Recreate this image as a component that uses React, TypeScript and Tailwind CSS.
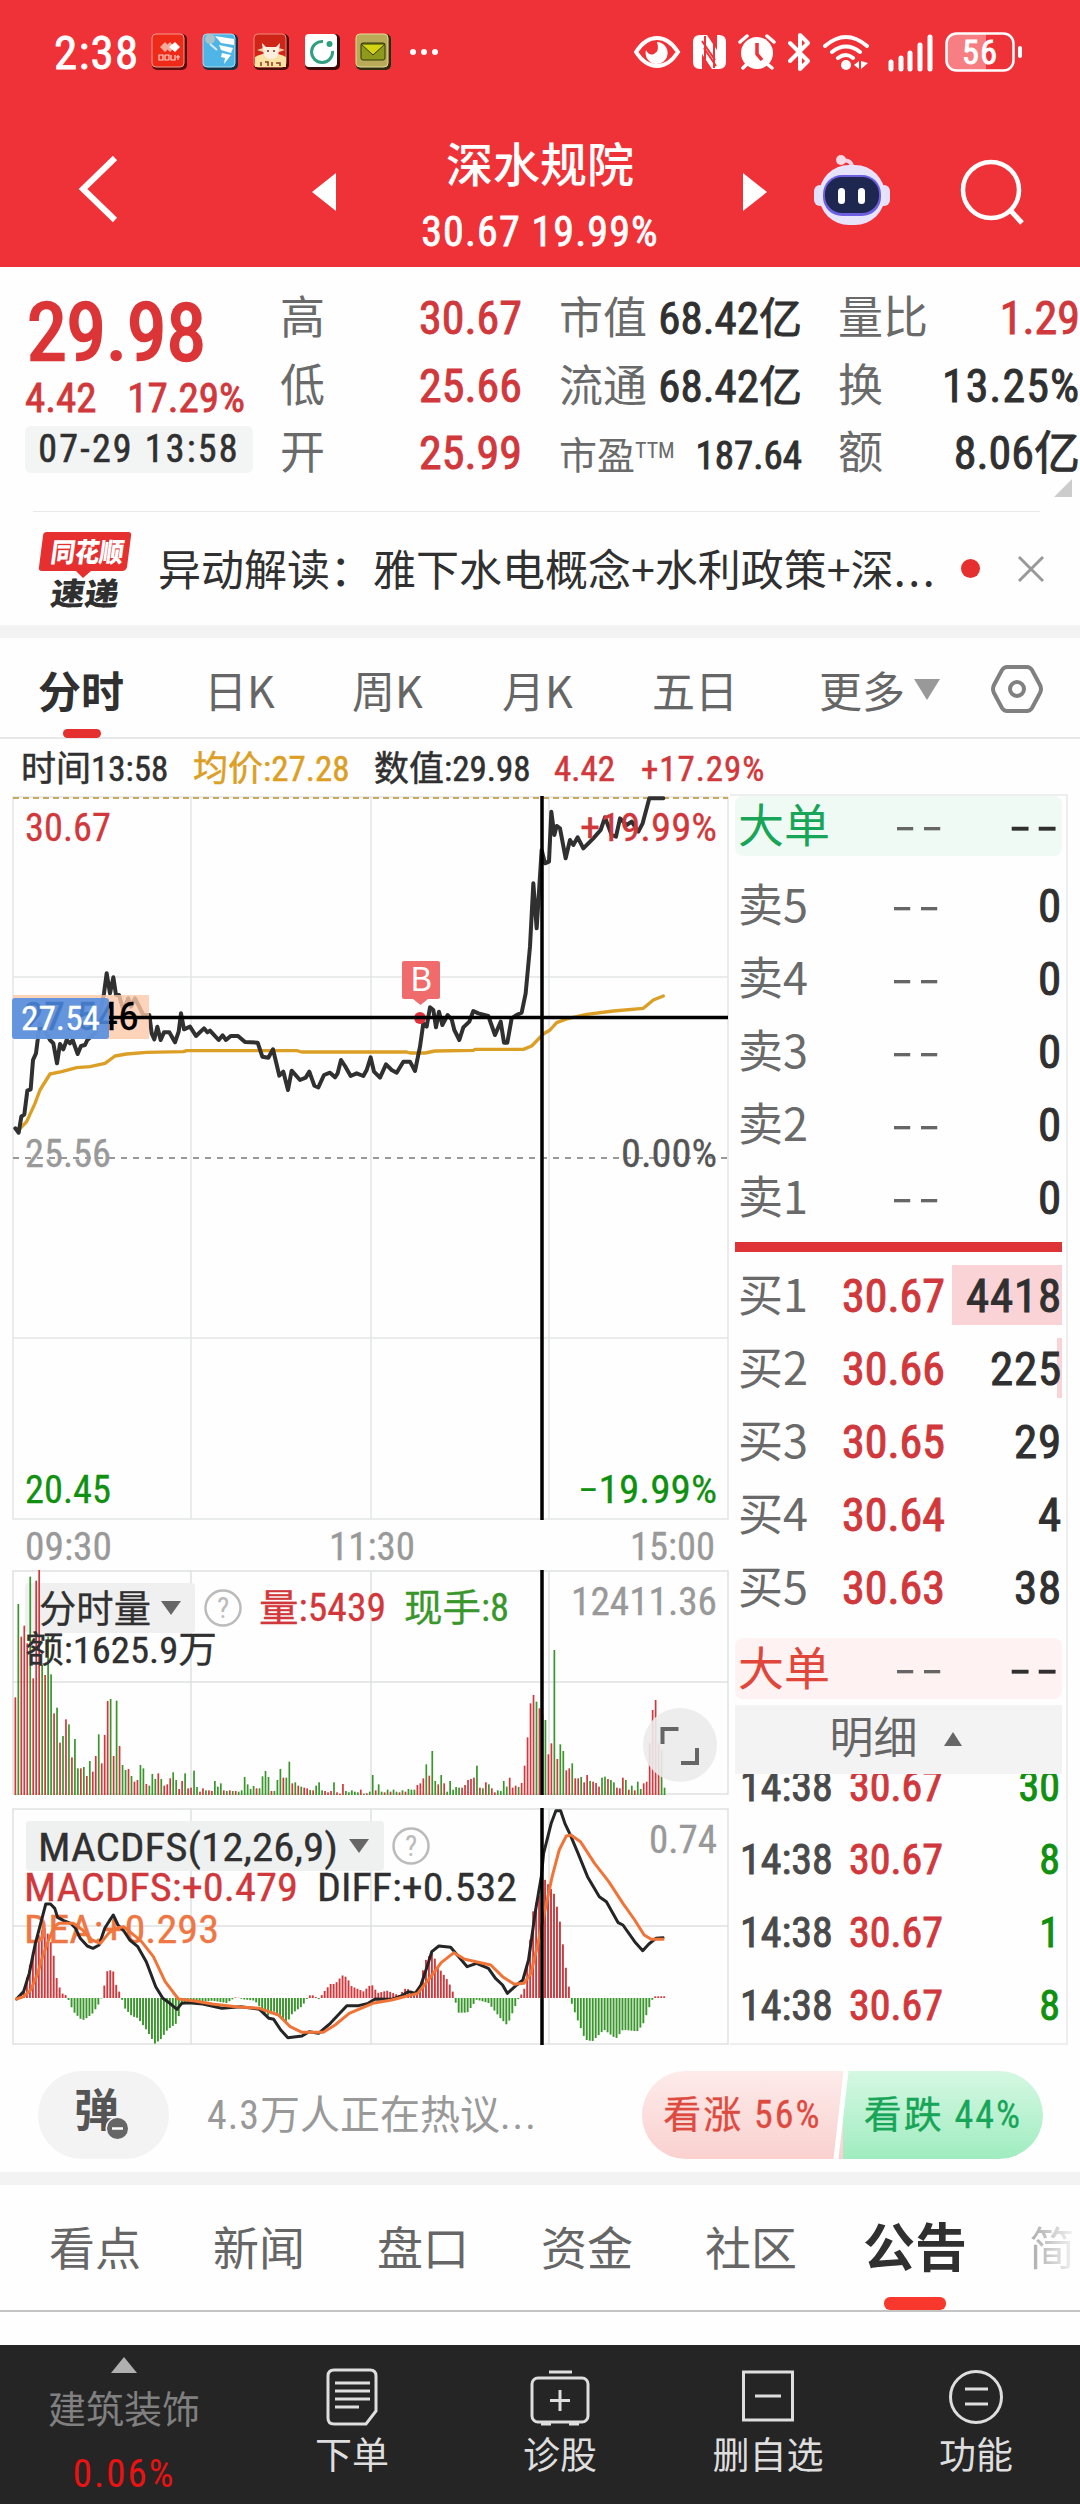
import type { ReactNode } from 'react'

const GREY = '#999999'
const RED = '#d0383c'
const GREEN = '#38962a'

interface Level {
  label: string
  price: string
  size: string
  depth?: string
}

const SELLS: Level[] = [
  { label: '卖5', price: '--', size: '0' },
  { label: '卖4', price: '--', size: '0' },
  { label: '卖3', price: '--', size: '0' },
  { label: '卖2', price: '--', size: '0' },
  { label: '卖1', price: '--', size: '0' },
]

const BUYS: Level[] = [
  { label: '买1', price: '30.67', size: '4418', depth: 'w-[110px]' },
  { label: '买2', price: '30.66', size: '225', depth: 'w-[5px]' },
  { label: '买3', price: '30.65', size: '29' },
  { label: '买4', price: '30.64', size: '4' },
  { label: '买5', price: '30.63', size: '38' },
]

const TRADES = [
  { time: '14:38', price: '30.67', size: '30' },
  { time: '14:38', price: '30.67', size: '8' },
  { time: '14:38', price: '30.67', size: '1' },
  { time: '14:38', price: '30.67', size: '8' },
]

// Price and average lines, in thirds of a pixel from the top-left of the chart area
const PRICE =
  '46,1045 56,1058 64,1010 73,1003 82,932 92,928 99,840 108,820 113,780 118,730 128,740 150,780 160,790 171,850 180,792 190,808 200,780 210,790 218,780 233,822 243,798 255,795 262,780 285,760 300,700 312,640 320,580 330,640 340,592 348,645 357,645 370,690 385,655 393,680 405,655 430,705 448,705 455,760 463,778 472,740 482,780 492,757 508,757 525,787 536,755 543,700 552,748 570,740 588,768 612,745 622,757 630,752 656,780 668,766 678,780 692,768 714,768 735,786 773,788 787,830 805,833 819,808 838,887 850,875 864,930 875,872 900,900 917,893 928,875 943,917 955,922 972,885 990,878 1005,892 1013,880 1023,840 1035,858 1052,888 1070,880 1090,888 1100,870 1112,832 1122,875 1140,893 1158,853 1175,870 1190,878 1210,845 1230,845 1245,873 1260,800 1270,730 1280,740 1290,682 1300,690 1308,742 1317,695 1327,735 1343,705 1355,718 1363,750 1378,780 1390,742 1408,725 1420,693 1435,700 1465,708 1485,765 1502,725 1512,788 1522,788 1535,715 1550,705 1565,698 1577,640 1590,500 1600,310 1610,445 1625,210 1635,250 1647,245 1654,95 1663,165 1670,138 1680,145 1697,235 1710,180 1720,195 1733,172 1750,205 1780,175 1802,150 1815,112 1835,165 1848,170 1860,115 1880,135 1895,125 1915,155 1928,130 1948,55 1990,55'
const AVERAGE =
  '56,1050 80,1025 105,970 120,930 150,882 185,875 230,863 270,860 315,850 345,828 380,822 440,817 550,815 560,812 890,812 905,816 1220,816 1230,819 1275,819 1305,813 1420,811 1425,808 1570,808 1595,798 1630,762 1650,750 1670,728 1700,717 1760,703 1840,693 1930,685 1960,660 1990,648'

// One bar a minute; a negative figure is a falling minute
const VOLUME = [
  293, -573, 475, 508, 455, -655, 350, 643, 675, -390, 360, -475, -362, 245, -262, 157, -177, 227, -212, 113, -168, -80,
  80, -84, 57, -102, 70, 117, -182, 95, 180, 282, -288, 117, -283, 147, -90, -75, 78, -57, 40, 45, -90, -80, 33, -28,
  -63, -48, 65, -48, 28, 32, 50, -68, -45, 18, 42, -65, 20, 22, -73, -24, 10, 20, -14, 14, 12, -42, -25, -35, 14, -12,
  14, -12, 12, -10, -14, -54, -32, -18, -27, 20, -20, -56, -72, -54, 12, -12, -45, -78, 52, -52, -100, 35, -38, 28,
  -25, 22, 20, -15, 14, -28, -38, -14, 12, 8, 12, -38, 8, 4, 33, -12, -8, -14, -10, -8, 16, -4, 5, -10, -60, 14, -32,
  -10, 8, -16, 10, -16, -10, 8, -14, 10, -18, -16, -16, 30, 35, 50, -92, 58, -132, -42, 32, -60, 35, -10, -42, -16,
  -24, -22, 22, 30, 45, 48, 52, -88, 22, -20, 38, -32, 20, 8, -14, -12, -42, -25, 52, 22, 28, -24, 36, 88, 173, 275,
  300, -280, 260, 240, -225, 122, 155, -435, 108, -152, -132, 74, 80, -95, 50, 50, -54, 38, 60, -42, 40, 36, 25, -52,
  -55, 48, -45, -38, 22, 20, 52, -45, 16, -28, 14, -40, -18, 35, 40, 155, 255, 285, 155, -135, -22,
]

const DIFF =
  '35,597 50,575 62,520 75,430 90,350 97,312 107,312 116,325 122,352 135,362 150,370 160,385 170,415 185,438 197,445 210,435 222,385 232,362 240,345 250,375 262,392 275,420 292,440 310,485 330,560 345,595 360,610 375,628 385,610 400,608 430,612 470,625 510,620 550,628 570,655 580,658 595,690 610,713 640,708 655,695 675,700 700,670 720,640 735,617 760,617 780,610 795,597 830,598 850,588 865,575 880,580 892,555 905,500 915,455 930,438 955,442 972,470 990,500 1010,490 1035,505 1050,535 1065,555 1075,580 1095,555 1108,540 1120,480 1135,330 1147,230 1152,160 1168,70 1178,32 1188,32 1197,70 1208,103 1225,160 1245,230 1270,290 1285,305 1310,368 1320,375 1345,425 1362,452 1375,432 1390,415 1405,413'
const DEA =
  '35,597 50,590 65,570 80,520 90,470 103,420 115,380 125,370 155,370 175,390 195,420 213,430 230,400 245,385 262,380 275,395 300,425 325,470 350,545 378,597 410,602 450,612 500,620 550,625 590,645 615,680 640,697 685,697 710,675 740,640 790,610 830,600 885,580 905,545 935,488 962,458 985,478 1040,495 1065,530 1090,553 1110,550 1125,520 1140,430 1155,330 1170,230 1185,150 1200,108 1210,105 1230,125 1260,190 1290,245 1320,310 1345,360 1365,405 1380,418 1405,418'
const HIST: [number, number][] = [
  [38, 0], [50, 20], [60, 80], [70, 140], [85, 200], [97, 210], [108, 165], [114, 125], [120, 60], [130, 15], [140, 8],
  [146, -8], [155, -40], [170, -62], [178, -66], [195, -48], [205, -28], [213, -8], [217, 8], [222, 45], [228, 85],
  [233, 82], [238, 92], [246, 40], [256, 8], [264, -30], [280, -55], [292, -60], [310, -95], [328, -137], [340, -125],
  [355, -95], [375, -75], [385, -20], [400, -15], [450, -8], [480, -15], [500, 3], [515, -4], [540, -8], [555, -35],
  [570, -55], [580, -40], [595, -60], [608, -75], [620, -45], [640, -25], [655, 8], [665, 8], [675, -4], [690, 25],
  [700, 42], [710, 42], [725, 68], [735, 62], [745, 35], [770, 20], [787, 42], [800, 15], [820, 22], [845, 8],
  [860, 30], [880, 15], [890, 40], [900, 110], [917, 140], [925, 100], [935, 80], [950, 50], [962, 10], [970, -44],
  [990, -44], [1010, -5], [1035, -15], [1060, -60], [1075, -82], [1090, -30], [1100, 3], [1110, 20], [1120, 130],
  [1130, 265], [1140, 300], [1155, 355], [1175, 310], [1187, 225], [1200, 80], [1207, 20], [1212, -20], [1225, -70],
  [1240, -125], [1255, -130], [1280, -95], [1305, -122], [1320, -95], [1350, -100], [1362, -80], [1375, -30],
  [1385, 5], [1408, 5],
]

function histAt(x: number) {
  const i = HIST.findIndex(([px]) => px >= x)
  if (i <= 0) return 0
  const [x0, y0] = HIST[i - 1]
  const [x1, y1] = HIST[i]
  return y0 + ((y1 - y0) * (x - x0)) / (x1 - x0)
}

interface LabelProps {
  x: number
  y: number
  w: number
  fill: string
  size?: number
  children: string
}

// Chart label stretched to a fixed width; y is the baseline
function Label({ x, y, w, fill, size = 38, children }: LabelProps) {
  return (
    <text x={x} y={y} textLength={w} lengthAdjust="spacingAndGlyphs" fontSize={size} fill={fill} stroke={fill} strokeWidth="0.3">
      {children}
    </text>
  )
}

function StatusBar() {
  return (
    <div className="flex h-[104px] items-center pl-[54px] pr-[57px] text-white">
      <span className="w-[97px] text-[47px] leading-none tracking-[1.2px] [-webkit-text-stroke:0.8px]">2:38</span>
      <div className="flex gap-[14px]">
        <svg width="37" height="38" viewBox="0 0 37 38">
          <rect x="1" y="1" width="35" height="36" rx="5" fill="#5b0d0d" />
          <rect x="1" y="1" width="32" height="33" rx="4" fill="#ee2a18" stroke="#f79a8c" />
          <path d="M9 14l5-5 5 5-5 5zM14 14l5-5 5 5-5 5z" fill="#f7a99a" />
          <path d="M18 14l6-5 5 5-5 5z" fill="#fff" />
          <path d="M8 22h4v5H8zM14 22h4v5M14 22v5h4M20 22v5h4v-5M27 22v5M25 24h4" stroke="#fbd3cc" strokeWidth="1.2" fill="none" />
        </svg>
        <svg width="37" height="38" viewBox="0 0 37 38">
          <rect x="1" y="1" width="35" height="36" rx="5" fill="#173244" />
          <rect x="1" y="1" width="32" height="33" rx="4" fill="#4fb5e6" stroke="#a9def5" />
          <path d="M13 3l19 3v6l-13-2zM17 12l14 3-2 5-10-3zM20 20l9 2-7 9 1-6-4-1z" fill="#fff" />
          <circle cx="8" cy="6" r="5" fill="#a9c3cc" />
          <path d="M8 11l7 6" stroke="#dceaf0" strokeWidth="2" />
        </svg>
        <svg width="37" height="38" viewBox="0 0 37 38">
          <rect x="1" y="1" width="35" height="36" rx="5" fill="#4a0d08" />
          <rect x="1" y="1" width="32" height="33" rx="4" fill="#cf2418" stroke="#f08a7b" />
          <path d="M2 24q15-8 31 0v10H2z" fill="#f8e2a4" />
          <path d="M9 10l4 4h10l4-4-1 8q-1 8-8 8t-8-8z" fill="#fdeedd" />
          <path d="M4 17l6-2v4zM32 17l-6-2v4z" fill="#f4c9a0" />
          <circle cx="15" cy="18" r="1" fill="#7a2a16" />
          <circle cx="21" cy="18" r="1" fill="#7a2a16" />
          <path d="M8 29v4M12 29h3v4M19 29v4M23 30h4v3" stroke="#8a3a1a" strokeWidth="1.5" fill="none" />
        </svg>
        <svg width="37" height="38" viewBox="0 0 37 38">
          <rect x="1" y="1" width="35" height="36" rx="5" fill="#3a0b0b" />
          <rect x="1" y="1" width="32" height="33" rx="4" fill="#fff" />
          <path d="M19 8.500A10.500 10.500 0 1 0 28.500 18" stroke="#2f9f80" strokeWidth="3" fill="none" />
          <circle cx="25.500" cy="11" r="3" fill="#2f9f80" />
        </svg>
        <svg width="37" height="38" viewBox="0 0 37 38">
          <rect x="1" y="1" width="35" height="36" rx="5" fill="#2f2a10" />
          <rect x="1" y="1" width="32" height="33" rx="4" fill="#b9ab57" stroke="#e6dd9c" />
          <rect x="6" y="10" width="24" height="17" rx="2" fill="#8f9a1c" stroke="#333a0a" />
          <path d="M6 11h24l-12 11z" fill="#d5d413" stroke="#333a0a" />
        </svg>
      </div>
      <div className="ml-[18px] flex gap-[5px]">
        <i className="size-[6px] rounded-full bg-white" />
        <i className="size-[6px] rounded-full bg-white" />
        <i className="size-[6px] rounded-full bg-white" />
      </div>
      <svg className="ml-auto" width="389" height="42" viewBox="634 31 389 42" fill="none" stroke="#fff">
        <path d="M636 52q9-14 21-14t21 14q-9 14-21 14t-21-14z" strokeWidth="4" />
        <path d="M657 42a11 11 0 1 1-11 8q3 6 8 4 6-3 3-12z" fill="#fff" stroke="none" />
        <path d="M700 35h7l10 15V35h2q7 0 7 7v20q0 7-7 7h-7l-10-15v15h-2q-7 0-7-7V42q0-7 7-7z" fill="#fff" stroke="none" />
        <path d="M705 36v25M714 44v24M702 41l13 19M704 48l12 18" stroke="#ef3138" strokeWidth="2" />
        <circle cx="757" cy="53" r="16" fill="#fff" stroke="none" />
        <path d="M740 42l7-6M774 42l-7-6M748 63l-5 5M766 63l6 5" strokeWidth="3.500" strokeLinecap="round" />
        <path d="M757 43v11l5 6" stroke="#ef3138" strokeWidth="3.500" />
        <path d="M790 43l18 18-8 8V35l8 8-18 18" strokeWidth="4" strokeLinejoin="round" strokeLinecap="round" />
        <path d="M825 46q21-18 42 0M832 52q14-11 28 0M838 58q8-6 15 0" strokeWidth="4" strokeLinecap="round" />
        <circle cx="846" cy="65" r="5" fill="#fff" stroke="none" />
        <path d="M854 65l5-4v8zM861 61v8l7-6z" fill="#fff" stroke="none" />
        <path d="M891 62v7M901 58v11M910 53v16M920 45v24M930 37v32" strokeWidth="5" strokeLinecap="round" />
        <path d="M986 33h-30q-10 0-10 10v18q0 10 10 10h30z" fill="#f77f83" stroke="none" />
        <rect x="946.500" y="33.500" width="67" height="37" rx="10" strokeWidth="2.500" />
        <rect x="1018" y="46" width="4" height="12" rx="2" fill="#fff" stroke="none" />
        <text x="962" y="64" fontSize="34" fill="#fff" strokeWidth="1" textLength="35">56</text>
      </svg>
    </div>
  )
}

function Header() {
  return (
    <header className="h-[267px] bg-[#ef3138] text-white">
      <StatusBar />
      <div className="flex h-[163px] items-start">
        <svg className="ml-[76px] mt-[50px]" width="44" height="70" viewBox="0 0 44 70" fill="none">
          <path d="M39 4L7 35l32 31" stroke="#fff" strokeWidth="6" />
        </svg>
        <svg className="ml-[192px] mt-[69px]" width="24" height="38" viewBox="0 0 24 38">
          <path d="M24 0v38L0 19z" fill="#fff" />
        </svg>
        <div className="ml-[84px] flex w-[240px] flex-col items-center">
          <h1 className="mt-[31px] text-[47px] font-medium leading-[62px]">深水规院</h1>
          <p className="mt-[12px] text-[42px] leading-[46px] tracking-[1.1px] [-webkit-text-stroke:0.8px]">30.67 19.99%</p>
        </div>
        <svg className="ml-[83px] mt-[69px]" width="24" height="38" viewBox="0 0 24 38">
          <path d="M0 0v38l24-19z" fill="#fff" />
        </svg>
        <svg className="ml-[47px] mt-[49px]" width="76" height="74" viewBox="0 0 76 74">
          <path d="M28 8q10-3 11 10" stroke="#f6d3e4" strokeWidth="4" fill="none" />
          <circle cx="27" cy="7" r="5" fill="#f8d9e6" />
          <rect x="0" y="32" width="12" height="21" rx="6" fill="#e3e0fa" />
          <rect x="64" y="32" width="12" height="21" rx="6" fill="#e3e0fa" />
          <rect x="5" y="12" width="66" height="60" rx="30" fill="#e7e3fb" />
          <rect x="9" y="22" width="58" height="41" rx="19" fill="#6e5fe0" />
          <rect x="11" y="24" width="54" height="36" rx="17" fill="#1d2750" />
          <rect x="24" y="35" width="7" height="16" rx="3.500" fill="#fff" />
          <rect x="44" y="35" width="7" height="16" rx="3.500" fill="#fff" />
        </svg>
        <svg className="ml-[70px] mt-[55px]" width="66" height="66" viewBox="0 0 66 66" fill="none" stroke="#fff" strokeWidth="4.500">
          <circle cx="31" cy="31" r="28" />
          <path d="M51 52l11 12" strokeWidth="5" />
        </svg>
      </div>
    </header>
  )
}

function Quote({ label, children, red }: { label: ReactNode; children: ReactNode; red?: boolean }) {
  return (
    <div className="flex h-[67.500px] items-center justify-between whitespace-nowrap">
      <span className="text-[45px] text-[#6a6a6a]">{label}</span>
      <span className={`text-[46px] [-webkit-text-stroke:0.9px] ${red ? 'text-[#d0383c]' : 'text-[#303030]'}`}>{children}</span>
    </div>
  )
}

function Quotes() {
  return (
    <section className="relative flex h-[245px] pt-[18px]">
      <div className="ml-[25px] w-[228px] text-[#dc3537]">
        <p className="mt-[9px] pl-[2px] text-[80px] leading-[78px] [-webkit-text-stroke:2.500px]">29.98</p>
        <p className="mt-[4px] flex justify-between pr-[8px] text-[41px] leading-[44px] text-[#d0383c] [-webkit-text-stroke:0.8px]">
          <span>4.42</span>
          <span>17.29%</span>
        </p>
        <p className="mt-[6px] h-[47px] rounded-md bg-[#f3f4f4] text-center text-[38px] leading-[47px] tracking-[2.2px] text-[#303030] [-webkit-text-stroke:0.6px]">
          07-29 13:58
        </p>
      </div>
      <div className="ml-[27px] w-[242px]">
        <Quote label="高" red>30.67</Quote>
        <Quote label="低" red>25.66</Quote>
        <Quote label="开" red>25.99</Quote>
      </div>
      <div className="ml-[37px] w-[243px]">
        <Quote label={<span className="text-[44px]">市值</span>}><span className="text-[45px]">68.42<span className="text-[43px]">亿</span></span></Quote>
        <Quote label={<span className="text-[44px]">流通</span>}><span className="text-[45px]">68.42<span className="text-[43px]">亿</span></span></Quote>
        <Quote label={<span className="text-[38px]">市盈<sup className="top-[-11px] text-[22px]">TTM</sup></span>}>
          <span className="text-[39px]">187.64</span>
        </Quote>
      </div>
      <div className="ml-[36px] w-[242px]">
        <Quote label="量比" red>1.29</Quote>
        <Quote label="换"><span className="tracking-[1px]">13.25%</span></Quote>
        <Quote label="额">8.06亿</Quote>
      </div>
      <svg className="absolute left-[1054px] top-[212px]" width="18" height="18" viewBox="0 0 18 18">
        <path d="M18 0v18H0z" fill="#ccc" />
      </svg>
    </section>
  )
}

function News() {
  return (
    <section className="flex h-[113px] items-center">
      <svg className="ml-[38px] mt-[2px]" width="96" height="78" viewBox="0 0 96 78">
        <path d="M9 1h81q4 0 3 4l-4 31q-1 4-5 4H53l-8 7-7-7H4q-4 0-3-4L5 5q0-4 4-4z" fill="#e5302f" />
        <g transform="skewX(-8)" fontWeight="900">
          <text x="16" y="31" fontSize="27" fill="#fff" textLength="73" lengthAdjust="spacingAndGlyphs">同花顺</text>
          <text x="22" y="74" fontSize="31" fill="#303030" textLength="68" lengthAdjust="spacingAndGlyphs">速递</text>
        </g>
      </svg>
      <p className="-mt-[3px] ml-[24px] w-[790px] whitespace-nowrap text-[43px] text-[#303030] [font-family:Noto_Sans_CJK_SC,sans-serif]">
        异动解读：雅下水电概念+水利政策+深<span className="tracking-[2.500px]">...</span>
      </p>
      <i className="ml-[13px] size-[19px] rounded-full bg-[#e5302f]" />
      <svg className="ml-[37px]" width="28" height="28" viewBox="0 0 28 28" stroke="#999" strokeWidth="3">
        <path d="M2 2l24 24M26 2L2 26" />
      </svg>
    </section>
  )
}

function PeriodTabs() {
  return (
    <nav className="relative flex h-[101px] items-center border-b-2 border-[#e8e8e8] pt-[3px] text-[43px] text-[#666] [font-family:Noto_Sans_CJK_SC,sans-serif]">
      <span className="ml-[38px] w-[166px] font-bold text-[#303030]">分时</span>
      <span className="w-[148px]">日K</span>
      <span className="w-[150px]">周K</span>
      <span className="w-[150px]">月K</span>
      <span className="w-[167px]">五日</span>
      <span>更多</span>
      <svg className="ml-[9px]" width="26" height="21" viewBox="0 0 26 21">
        <path d="M0 0h26L13 21z" fill="#999" />
      </svg>
      <svg className="ml-[50px]" width="54" height="52" viewBox="0 0 54 52" fill="none" stroke="#808080" strokeWidth="4">
        <path d="M17 4h20q3 0 5 3l8 15q2 4 0 8l-8 15q-2 3-5 3H17q-3 0-5-3L4 30q-2-4 0-8l8-15q2-3 5-3z" />
        <circle cx="27" cy="26" r="7" />
      </svg>
      <i className="absolute bottom-[-1px] left-[63px] h-[9px] w-[38px] rounded-full bg-[#e5302f]" />
    </nav>
  )
}

function Legend() {
  return (
    <div className="flex h-[57px] items-center whitespace-nowrap pl-[21px] pt-[5px] text-[35px] text-[#303030] [-webkit-text-stroke:0.5px]">
      <span className="w-[172px]">时间13:58</span>
      <span className="w-[181px] text-[#dc9f26]">均价:27.28</span>
      <span className="w-[180px]">数值:29.98</span>
      <span className="w-[87px] text-[#d0383c]">4.42</span>
      <span className="tracking-[0.9px] text-[#d0383c]">+17.29%</span>
    </div>
  )
}

function PriceChart() {
  return (
    <svg className="block" width="730" height="774" viewBox="0 796 730 774">
      <path d="M13 797H728V1519H13zM191 797V1519M371 797V1519M549 797V1519M13 977H728M13 1338H728" fill="none" stroke="#e4e6e6" strokeWidth="1.500" />
      <path d="M13 1158H728" stroke="#999" strokeWidth="2" strokeDasharray="6 6" />
      <path d="M13 798H728" stroke="#c9a860" strokeWidth="2" strokeDasharray="6 4" />
      <Label x={25} y={1167} w={86} fill={GREY}>25.56</Label>
      <Label x={621} y={1167} w={96} fill="#555">0.00%</Label>
      <g transform="translate(0 780) scale(0.33333)" fill="none" strokeLinejoin="round" strokeLinecap="round">
        <polyline points={AVERAGE} stroke="#dc9f26" strokeWidth="10" />
        <polyline points={PRICE} stroke="#303030" strokeWidth="12" />
      </g>
      <Label x={25} y={841} w={86} fill={RED}>30.67</Label>
      <Label x={580} y={841} w={137} fill={RED}>+19.99%</Label>
      <Label x={25} y={1503} w={86} fill="#109010">20.45</Label>
      <Label x={578} y={1503} w={139} fill="#109010">−19.99%</Label>
      <circle cx="420" cy="1018" r="6" fill="#e0323c" />
      <path d="M404 961h34q2 0 2 2v34q0 2-2 2h-10l-7.500 6-7.500-6h-9q-2 0-2-2v-34q0-2 2-2z" fill="#f06c6c" />
      <text x="421" y="991" fontSize="33" fill="#fff" textAnchor="middle" className="[font-family:Noto_Sans_CJK_SC,sans-serif]">B</text>
      <rect x="13" y="995" width="136" height="44" fill="#fcc9a8" fillOpacity="0.8" />
      <path d="M109 1017.500H728M542 796V1520" stroke="#000" strokeWidth="3.500" />
      <Label x={23} y={1030} w={116} fill="#000" size={39}>27.546</Label>
      <rect x="12" y="998" width="97" height="41" rx="3" fill="#4d8be2" fillOpacity="0.87" />
      <Label x={21} y={1030} w={79} fill="#fff" size={33}>27.54</Label>
      <Label x={25} y={1560} w={87} fill={GREY}>09:30</Label>
      <Label x={329} y={1560} w={86} fill={GREY}>11:30</Label>
      <Label x={630} y={1560} w={85} fill={GREY}>15:00</Label>
    </svg>
  )
}

function VolumeChart() {
  return (
    <svg className="block" width="730" height="238" viewBox="0 1570 730 238">
      <path d="M13 1571H728V1794H13zM191 1571V1794M371 1571V1794M549 1571V1794M13 1682H728" fill="none" stroke="#dfe1e1" strokeWidth="1.500" />
      <rect x="25" y="1583" width="170" height="50" rx="4" fill="#f0f0f0" />
      {VOLUME.map((v, i) => {
        const h = Math.abs(v) / 3
        return <rect key={i} x={14.500 + i * 2.978} y={1795 - h} width="1.700" height={h} fill={v > 0 ? RED : GREEN} />
      })}
      <Label x={39} y={1622} w={112} fill="#303030">分时量</Label>
      <path d="M161 1601h20l-10 14z" fill="#666" />
      <circle cx="223" cy="1608" r="17.500" fill="none" stroke="#bbb" strokeWidth="2.500" />
      <text x="223" y="1618" fontSize="29" fill="#bbb" textAnchor="middle">?</text>
      <Label x={259} y={1621} w={127} fill={RED}>量:5439</Label>
      <Label x={404} y={1621} w={105} fill={GREEN}>现手:8</Label>
      <Label x={571} y={1615} w={146} fill={GREY}>12411.36</Label>
      <Label x={25} y={1663} w={192} fill="#303030" size={37}>额:1625.9万</Label>
      <path d="M542 1570V1795" stroke="#000" strokeWidth="3.500" />
      <circle cx="680" cy="1745" r="37" fill="#ebebeb" fillOpacity="0.9" />
      <path d="M662.500 1744v-15h16M681 1763h16v-15" fill="none" stroke="#666" strokeWidth="4" />
    </svg>
  )
}

function MacdChart() {
  return (
    <svg className="block" width="730" height="247" viewBox="0 1808 730 247">
      <path d="M13 1809H728V2044H13zM191 1809V2044M371 1809V2044M549 1809V2044M13 1926H728" fill="none" stroke="#dfe1e1" strokeWidth="1.500" />
      <rect x="26" y="1821" width="358" height="50" rx="4" fill="#eff0f0" />
      {VOLUME.map((_, i) => {
        const v = histAt(38 + i * 6.310)
        const h = Math.abs(v) / 3
        return <rect key={i} x={17 + i * 2.978} y={v > 0 ? 1998 - h : 1998} width="1.900" height={h} fill={v > 0 ? RED : GREEN} />
      })}
      <Label x={38} y={1861} w={300} fill="#303030">MACDFS(12,26,9)</Label>
      <path d="M349 1839h20l-10 14z" fill="#666" />
      <circle cx="411" cy="1846" r="17.500" fill="none" stroke="#bbb" strokeWidth="2.500" />
      <text x="411" y="1856" fontSize="29" fill="#bbb" textAnchor="middle">?</text>
      <Label x={24} y={1901} w={274} fill={RED}>MACDFS:+0.479</Label>
      <Label x={317} y={1901} w={200} fill="#303030">DIFF:+0.532</Label>
      <Label x={24} y={1943} w={195} fill="#ee7744">DEA:+0.293</Label>
      <Label x={649} y={1853} w={68} fill={GREY}>0.74</Label>
      <g transform="translate(0 1800) scale(0.4719 0.33333)" fill="none" strokeLinejoin="round" strokeLinecap="round">
        <polyline points={DIFF} stroke="#252525" strokeWidth="3" vectorEffect="non-scaling-stroke" />
        <polyline points={DEA} stroke="#f07438" strokeWidth="3" vectorEffect="non-scaling-stroke" />
      </g>
      <path d="M542 1808V2045" stroke="#000" strokeWidth="3.500" />
    </svg>
  )
}

function Dashes({ dark }: { dark?: boolean }) {
  return (
    <span className={`-mt-[16px] text-[66px] font-light leading-[50px] tracking-[5px] [font-family:Noto_Sans_CJK_SC,sans-serif] ${dark ? 'text-[#303030] [-webkit-text-stroke:0.5px]' : 'text-[#666] [-webkit-text-stroke:0px]'}`}>
      --
    </span>
  )
}

function LevelRow({ level }: { level: Level }) {
  return (
    <div className="relative flex h-[73px] items-center leading-[60px]">
      {level.depth && <i className={`absolute right-0 top-[6px] h-[60px] bg-[#f9d3d6] ${level.depth}`} />}
      <span className="-mt-[5px] w-[105px] pl-[3px] text-[45px] text-[#6a6a6a] [font-family:Noto_Sans_CJK_SC,sans-serif]">{level.label}</span>
      <span className="flex w-[105px] justify-end text-[46px] text-[#d0383c] [-webkit-text-stroke:1px]">
        {level.price === '--' ? <Dashes /> : level.price}
      </span>
      <span className="relative ml-auto text-[47px] tracking-[0.8px] text-[#303030] [-webkit-text-stroke:1px]">{level.size}</span>
    </div>
  )
}

function BigOrder({ className }: { className: string }) {
  return (
    <div className={`flex items-center rounded-lg pl-[3px] leading-[60px] ${className}`}>
      <span className="w-[105px] text-[46px]">大单</span>
      <span className="flex w-[105px] justify-end"><Dashes /></span>
      <span className="-mr-px ml-auto flex"><Dashes dark /></span>
    </div>
  )
}

function OrderBook() {
  return (
    <aside className="mt-[-2px] w-[338px] self-start border-r-2 border-b-2 border-[#eee] border-t-2 pl-[5px] pr-[4px]">
      <BigOrder className="h-[60px] bg-[#f0faf5] text-[#18a558]" />
      <div className="mt-[13px]">
        {SELLS.map((level) => <LevelRow key={level.label} level={level} />)}
      </div>
      <div className="mt-[8px] h-[10px] bg-[#de3437]" />
      <div className="mt-[7px]">
        {BUYS.map((level) => <LevelRow key={level.label} level={level} />)}
      </div>
      <BigOrder className="mt-[14px] h-[61px] bg-[#fff2f2] text-[#e0463a]" />
      <div className="mt-[6px] flex h-[69px] items-center justify-center bg-[#f3f3f3] pb-[2px] pr-[6px] text-[44px] text-[#666]">
        明细
        <svg className="ml-[26px]" width="18" height="14" viewBox="0 0 18 14">
          <path d="M0 14L9 0l9 14z" fill="#666" />
        </svg>
      </div>
      <div className="h-[269px] overflow-hidden">
        <div className="mt-[-24px] text-[42px] [-webkit-text-stroke:0.9px]">
          {TRADES.map((t, i) => (
            <div key={i} className="flex h-[73px] items-center pl-[5px] pr-[2px]">
              <span className="w-[109px] text-[#4a4a4a]">{t.time}</span>
              <span className="text-[#d0383c]">{t.price}</span>
              <span className="ml-auto text-[#109010]">{t.size}</span>
            </div>
          ))}
        </div>
      </div>
    </aside>
  )
}

function Sentiment() {
  return (
    <section className="flex h-[116px] items-center pt-[2px]">
      <div className="relative ml-[38px] flex h-[88px] w-[131px] items-center justify-center rounded-full bg-[#f3f3f3] text-[45px] font-bold text-[#555]">
        <span className="-ml-[14px] -mt-[6px]">弹</span>
        <svg className="absolute left-[67px] top-[45px]" width="25" height="25" viewBox="0 0 25 25">
          <circle cx="12.500" cy="12.500" r="12" fill="#f3f3f3" />
          <circle cx="12.500" cy="12.500" r="10.500" fill="#666" />
          <path d="M7 12.500h11" stroke="#fff" strokeWidth="2.500" />
        </svg>
      </div>
      <span className="ml-[38px] w-[435px] pt-[2px] text-[40px] text-[#999]">
        <span className="tracking-[1px]">4.3</span>万人正在热议<span className="tracking-[2px]">...</span>
      </span>
      <div className="relative flex h-[88px] w-[401px] overflow-hidden rounded-full text-[38px] leading-[60px] [-webkit-text-stroke:0.3px]">
        <span className="flex w-[201px] items-center justify-center bg-linear-to-b from-[#fdebea] to-[#f9d1cf] tracking-[2px] text-[#dd4a40]">看涨 56%</span>
        <span className="flex w-[200px] items-center justify-center bg-linear-to-b from-[#d5f8e3] to-[#9fecc0] tracking-[2px] text-[#18a558]">看跌 44%</span>
        <svg className="absolute left-[190px] top-0" width="20" height="88" viewBox="0 0 20 88">
          <path d="M14 0L4 88" stroke="#fff" strokeWidth="5" />
        </svg>
      </div>
    </section>
  )
}

function SectionTabs() {
  return (
    <nav className="relative flex h-[127px] items-center whitespace-nowrap border-b-2 border-[#c4c4c4] pt-[4px] text-[46px] text-[#666]">
      <span className="ml-[49px] w-[164px]">看点</span>
      <span className="w-[164px]">新闻</span>
      <span className="w-[164px]">盘口</span>
      <span className="w-[164px]">资金</span>
      <span className="w-[158px]">社区</span>
      <span className="w-[166px] text-[52px] font-bold text-[#303030]">公告</span>
      <span className="bg-linear-to-r from-[#aaa] to-[#f4f4f4] bg-clip-text text-transparent">简</span>
      <i className="absolute bottom-0 left-[884px] h-[13px] w-[62px] rounded-[6px] bg-[#f8382c]" />
    </nav>
  )
}

function BottomItem({ label, children }: { label: string; children: ReactNode }) {
  return (
    <div className="flex w-[208px] flex-col items-center pt-[22px] text-[37px] leading-[50px] text-[#dedede]">
      <svg width="62" height="60" viewBox="0 0 62 60" fill="none" stroke="#dedede" strokeWidth="3">
        {children}
      </svg>
      <span className="mt-[5px]">{label}</span>
    </div>
  )
}

function BottomBar() {
  return (
    <footer className="flex h-[159px] bg-[#252525]">
      <div className="flex w-[248px] flex-col items-center pt-[12px]">
        <svg width="26" height="16" viewBox="0 0 26 16">
          <path d="M0 16L13 0l13 16z" fill="#b0b0b0" />
        </svg>
        <span className="mt-[12px] text-[38px] leading-[50px] text-[#808080]">建筑装饰</span>
        <span className="mt-[17px] text-[39px] leading-[44px] tracking-[2px] text-[#ea1212]">0.06%</span>
      </div>
      <BottomItem label="下单">
        <path d="M13 3h36q6 0 6 6v35L45 57H13q-6 0-6-6V9q0-6 6-6z" />
        <path d="M14 16h35M14 24h35M14 32h35M14 40h24" />
      </BottomItem>
      <BottomItem label="诊股">
        <rect x="3" y="11" width="56" height="44" rx="6" />
        <path d="M20 5h23M31 23v21M21 33.500h20M12 57h10M40 57h10" />
      </BottomItem>
      <BottomItem label="删自选">
        <rect x="6.500" y="5" width="49" height="48" />
        <path d="M18 29h26" />
      </BottomItem>
      <BottomItem label="功能">
        <circle cx="31" cy="30" r="25.500" />
        <path d="M20 22h23M20 37h23" />
      </BottomItem>
    </footer>
  )
}

export default function App() {
  return (
    <div className="h-[2504px] w-[1080px] overflow-hidden bg-[#fefefe] [font-family:Roboto_Condensed,Noto_Sans_CJK_SC,sans-serif]">
      <Header />
      <Quotes />
      <div className="ml-[33px] mt-[-1px] h-px w-[1007px] bg-[#e8e8e8]" />
      <News />
      <div className="h-[13px] bg-[#f3f3f3]" />
      <PeriodTabs />
      <Legend />
      <main className="flex h-[1260px]">
        <div className="w-[730px]">
          <PriceChart />
          <VolumeChart />
          <MacdChart />
        </div>
        <OrderBook />
      </main>
      <Sentiment />
      <div className="h-[13px] bg-[#f3f3f3]" />
      <SectionTabs />
      <div className="h-[33px]" />
      <BottomBar />
    </div>
  )
}
